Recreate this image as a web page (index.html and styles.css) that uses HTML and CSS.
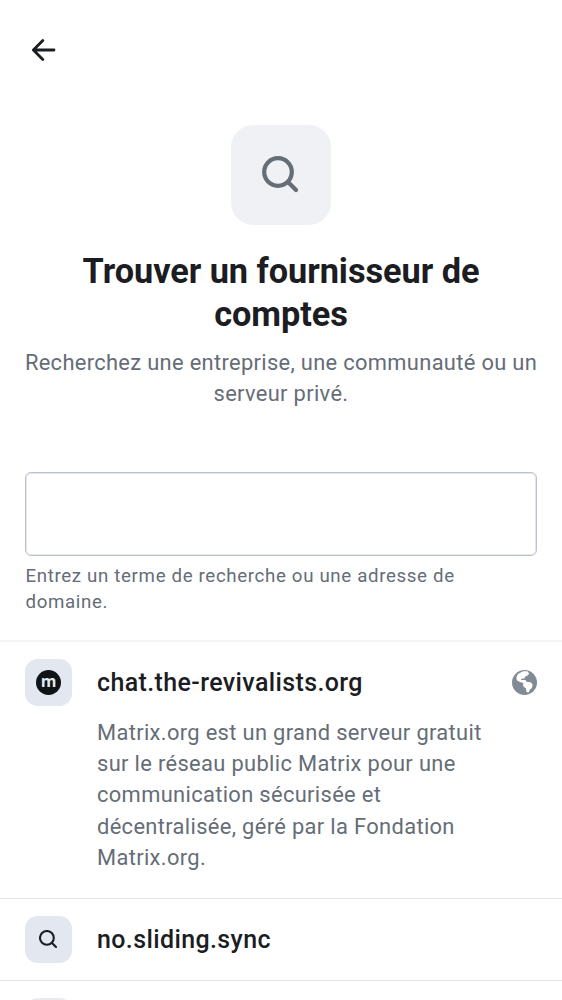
FILE: index.html
```html
<!DOCTYPE html>
<html lang="fr">
<head>
<meta charset="utf-8">
<title>Trouver un fournisseur de comptes</title>
<link rel="stylesheet" href="styles.css">
</head>
<body>
<main class="screen">
  <header class="topbar">
    <svg class="back" viewBox="0 0 24 22" fill="none" stroke="#1b1d22" stroke-width="2.8" stroke-linecap="round" stroke-linejoin="round"><path d="M22 11H2M10.800 1.600L1.400 11l9.400 9.400"/></svg>
  </header>
  <section class="hero">
    <div class="hero-icon">
      <svg viewBox="0 0 38 38" fill="none" stroke="#656d77" stroke-width="4.2" stroke-linecap="round"><circle cx="16" cy="16" r="13.800"/><path d="M26.500 26.500l7.500 7.500"/></svg>
    </div>
    <h1 class="title">Trouver un fournisseur de<br>comptes</h1>
    <p class="subtitle">Recherchez une entreprise, une communauté ou un<br>serveur privé.</p>
  </section>
  <section class="search">
    <input class="field" type="text" aria-label="Recherche">
    <p class="helper">Entrez un terme de recherche ou une adresse de<br>domaine.</p>
  </section>
  <ul class="list">
    <li class="item first">
      <div class="row">
        <span class="tile"><span class="logo">m</span></span>
        <span class="name">chat.the-revivalists.org</span>
        <svg class="globe" viewBox="0 0 25 25"><circle cx="12.5" cy="12.5" r="12.5" fill="#818a95"/><path fill="#fff" d="M6 4L11 1.300h4.500l1.700 2.500-2 2-2.200.9-.5 1.800-3.300.2v1.300h4.300l1 1.800 4.200.5 2 2.200-.8 3.500-2 1.500-1.200 3-2.200-.6-.5-3.300-3-2.700.4-3-3.600-.9-3-1.800-.4-3z"/></svg>
      </div>
      <p class="desc">Matrix.org est un grand serveur gratuit<br>sur le réseau public Matrix pour une<br>communication sécurisée et<br>décentralisée, géré par la Fondation<br>Matrix.org.</p>
    </li>
    <li class="item second">
      <div class="row">
        <span class="tile"><svg class="small-search" viewBox="0 0 38 38" fill="none" stroke="#1b1d22" stroke-width="4.200" stroke-linecap="round"><circle cx="15.800" cy="15.800" r="13.800"/><path d="M26.500 26.500l7.500 7.500"/></svg></span>
        <span class="name">no.sliding.sync</span>
      </div>
    </li>
    <li class="item third">
      <div class="row"><span class="tile"></span></div>
    </li>
  </ul>
</main>
</body>
</html>
```
FILE: styles.css
```css
* { box-sizing: border-box; }
body { margin: 0; background: #fff; font-family: Roboto, sans-serif; color: #1b1d22; }
h1, p, ul { margin: 0; padding: 0; }
.screen { width: 562px; height: 1000px; overflow: hidden; }
.topbar { height: 100px; padding: 39px 0 0 32px; }
.back { display: block; width: 24px; height: 22px; }
.hero { display: flex; flex-direction: column; align-items: center; padding-top: 25px; text-align: center; white-space: nowrap; }
.hero-icon { width: 100px; height: 100px; border-radius: 22px; background: #f0f1f5; padding: 31px; }
.hero-icon svg { display: block; width: 38px; height: 38px; }
.title { margin-top: 25px; font-size: 34.3px; line-height: 43px; font-weight: 700; letter-spacing: -0.05px; }
.subtitle { margin-top: 11px; font-size: 21.86px; line-height: 31.2px; letter-spacing: 0.33px; color: #656d77; }
.search { padding: 62.6px 25px 0; }
.field { display: block; width: 512px; height: 84px; border: 1px solid #bcc1cd; border-radius: 6px; background: #fff; box-shadow: inset 0 0 0 1px rgba(188, 193, 205, 0.4); outline: none; }
.helper { margin-top: 7px; height: 53px; padding-left: 0.5px; font-size: 18.7px; line-height: 26px; letter-spacing: 0.65px; color: #656d77; white-space: nowrap; }
.list { list-style: none; margin-top: 24.4px; }
.item { padding: 17px 25px 0; border-top: 1px solid #e3e5eb; }
.first { height: 258px; border-top: 2px solid #f2f3f5; }
.second { height: 82px; }
.row { display: flex; align-items: center; height: 47px; }
.tile { display: flex; align-items: center; justify-content: center; width: 47px; height: 47px; border-radius: 12.5px; background: #e3e7f0; }
.third .tile { background: #e9ebf0; }
.logo { width: 25px; height: 25px; border-radius: 50%; background: #101317; color: #e3e7f0; font: 700 16px/22px "Open Sans", sans-serif; text-align: center; }
.name { margin-left: 25px; font-size: 24.98px; font-weight: 500; letter-spacing: 0.39px; }
.globe { width: 25px; height: 25px; margin-left: auto; }
.small-search { width: 19px; height: 19px; }
.desc { margin: 10.5px 0 0 72px; font-size: 21.86px; line-height: 31.2px; letter-spacing: 0.35px; color: #656d77; white-space: nowrap; }
```
